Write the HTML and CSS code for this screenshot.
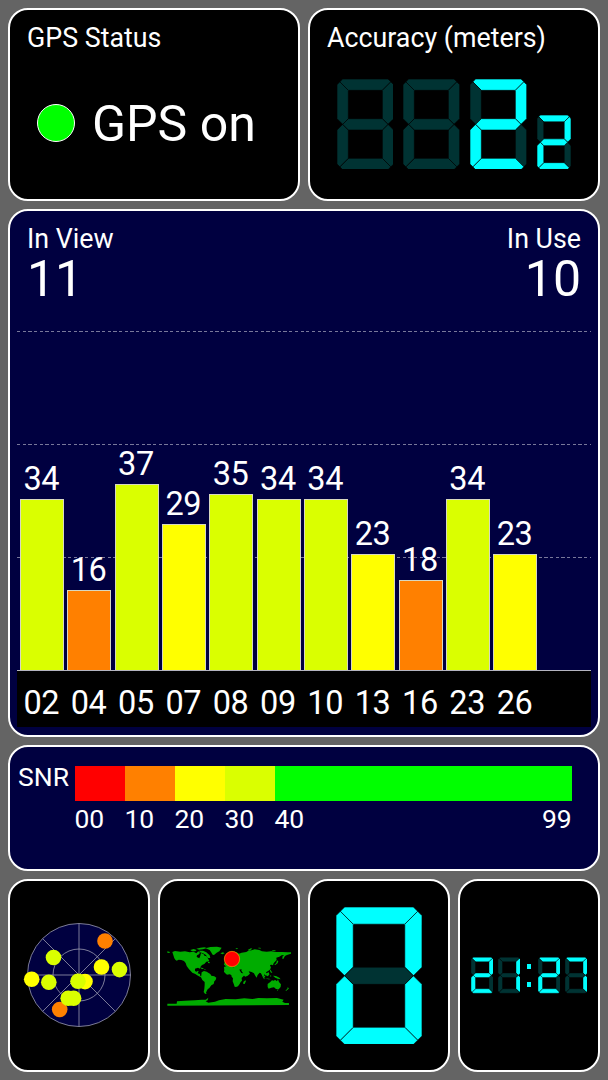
FILE: index.html
```html
<!DOCTYPE html>
<html lang="en">
<head>
  <meta charset="UTF-8" />
  <meta name="viewport" content="width=device-width, initial-scale=1" />
  <title>GPS Test</title>
  <link rel="stylesheet" href="styles.css">
</head>
<body>
  <div class="dashboard">
    <section class="panel status">
      <h2>GPS Status</h2>
      <div class="status-row">
        <span class="status-dot"></span>
        <span class="status-text">GPS on</span>
      </div>
    </section>

    <section class="panel accuracy">
      <h2>Accuracy (meters)</h2>
      <div class="accuracy-digits" id="accuracy"></div>
    </section>

    <section class="panel signal">
      <div class="signal-head">
        <div class="count">
          <h2>In View</h2>
          <div class="count-value">11</div>
        </div>
        <div class="count count-right">
          <h2>In Use</h2>
          <div class="count-value">10</div>
        </div>
      </div>
      <div class="plot">
        <div class="gridlines"><i></i><i></i><i></i></div>
        <div class="bars" id="bars"></div>
      </div>
      <div class="axis" id="axis"></div>
    </section>

    <section class="panel legend">
      <div class="legend-title">SNR</div>
      <div class="legend-scale">
        <div class="step"><i class="snr-00"></i><span>00</span></div>
        <div class="step"><i class="snr-10"></i><span>10</span></div>
        <div class="step"><i class="snr-20"></i><span>20</span></div>
        <div class="step"><i class="snr-30"></i><span>30</span></div>
        <div class="step step-last"><i class="snr-40"></i><span>40</span><span>99</span></div>
      </div>
    </section>

    <section class="panel tile">
      <svg class="sky" viewBox="-56 -56 112 112">
        <circle class="sky-disc" r="51.5" />
        <circle class="sky-line" r="26" />
        <path class="sky-line" d="M-51.5 0H51.5M0 -51.5V51.5M-36.4 -36.4L36.4 36.4M-36.4 36.4L36.4 -36.4" />
        <g id="sats"></g>
      </svg>
    </section>

    <section class="panel tile">
      <svg class="map" viewBox="36 78 370 182">
        <g class="land">
          <!-- north america -->
          <path d="M37 94l8 2 -2 3 -6 -1zM52 96l8 -3 16 2 14 -1 14 3 12 -2 8 5 6 -6 5 4 -3 5 -6 3 -1 5 8 4 3 -8 2 -8 8 4 3 5 5 0 6 9 3 7 -9 1 -6 7 -7 3 -5 6 -1 5 -6 -3 -9 3 0 7 5 2 4 -3 2 2 -3 6 7 2 1 6 5 2 -3 2 -9 -5 -8 -5 -9 -4 -7 -7 -4 -5 -6 -8 -3 -9 -5 -6 -8 -3 -8 -1 -6 3 -4 -3 -3 -4z" />
          <path d="M106 90l10 -3 9 3 -4 4 -10 0zM124 86l12 -3 12 -1 8 2 -12 4 -12 1zM132 92l12 0 10 5 10 9 2 8 -8 0 -5 -9 -9 -5 -9 -3z" />
          <path d="M152 85l14 -4 20 -1 14 3 -3 5 -4 6 -8 4 -8 7 -4 -1 -5 -8 -4 -6zM196 100l8 -3 5 3 -7 3z" />
          <path d="M133 142l10 2 4 3 -6 0zM148 147l5 1 -4 2zM159 126l5 0 0 4 -5 -1z" />
          <!-- south america -->
          <path d="M140 157l7 -4 8 2 6 4 5 3 3 5 9 2 6 4 -2 7 -4 4 -2 8 -7 4 -6 8 -5 4 -3 6 -2 4 2 4 -5 -1 -4 -5 2 -9 1 -12 0 -9 -7 -6 -4 -8 1 -6z" />
          <!-- africa -->
          <path d="M207 141l9 -3 10 -1 8 5 9 0 7 1 4 8 5 8 5 1 8 -1 -6 9 -6 6 1 8 -4 4 -3 6 -5 7 -6 2 -4 -1 -3 -9 -3 -7 1 -9 -4 -5 -1 -5 -5 -2 -8 1 -6 -5 -3 -4 1 -6zM271 181l2 2 -4 9 -4 0 0 -6z" />
          <!-- europe and asia -->
          <path d="M207 134l2 -7 7 -2 -3 -4 7 -3 8 -4 -3 -8 4 -7 8 -4 8 2 7 4 8 -3 14 -2 6 -4 10 -1 9 -3 14 2 8 4 14 1 14 -1 16 2 17 0 16 1 11 0 2 3 -8 3 -7 2 -6 3 -5 9 -3 -1 1 -7 5 -4 -8 1 -7 4 -9 3 1 7 -5 5 -4 5 -2 6 -4 -2 -5 1 3 8 -4 7 -6 4 -5 3 3 5 -3 5 -5 -4 -2 7 4 8 -5 -3 -4 -9 -3 -6 -4 -2 -6 7 -3 8 -5 -7 -3 -6 -7 -4 -9 -2 4 7 -7 6 -7 3 -3 -2 -4 -9 -5 -7 1 -4 -9 1 -4 -3 -5 1 -6 -5 -3 -3 -7 1 -5 5z" />
          <path d="M211 112l5 -2 2 8 -5 2zM278 90l10 -5 4 1 -9 6zM241 85l8 -1 -3 4zM310 83l6 0 2 3 -8 -1zM352 91l10 0 -1 2 -9 0z" />
          <path d="M366 121l4 3 -2 6 -7 5 -3 -1 6 -5z" />
          <!-- islands and oceania -->
          <path d="M319 158l5 4 7 8 -2 3 -7 -8zM334 160l8 -3 1 7 -5 5 -5 -3zM330 175l12 1 6 2 -8 0zM346 164l3 4 -2 4zM345 148l4 5 3 5 -4 0 -3 -5zM354 167l9 1 10 5 4 5 -9 -2 -7 -3zM303 157l2 3 -2 1z" />
          <path d="M338 192l8 -6 5 -5 6 1 3 -3 6 5 3 -6 3 8 6 7 -1 8 -6 7 -8 -1 -6 -5 -8 1 -8 3 -3 -5zM366 209l4 0 -2 4zM398 202l4 3 -4 4 -5 4 -1 -2 5 -4z" />
          <!-- antarctica -->
          <path d="M37 257v-6h28l1 -7 24 -2 30 -1 20 -2 12 0 8 -6 -2 8 -6 3 8 4 20 -3 12 -4 20 -4 30 1 26 -3 24 2 18 -3 26 1 30 -1 20 5 -4 6 8 4h12v6z" />
        </g>
        <circle class="here" cx="231" cy="117" r="23" />
      </svg>
    </section>

    <section class="panel tile">
      <div id="speed"></div>
    </section>

    <section class="panel tile">
      <div class="clock" id="clock"></div>
    </section>
  </div>

  <script>
    // Seven segment shapes on a 50x80 box, keyed a-g
    const segments = {
      a: '5,0 45,0 47.5,2.5 40,10 10,10 2.5,2.5',
      b: '47.5,2.5 50,5 50,35 45,40 40,35 40,10',
      c: '45,40 50,45 50,75 47.5,77.5 40,70 40,45',
      d: '2.5,77.5 10,70 40,70 47.5,77.5 45,80 5,80',
      e: '5,40 10,45 10,70 2.5,77.5 0,75 0,45',
      f: '2.5,2.5 10,10 10,35 5,40 0,35 0,5',
      g: '5,40 10,35 40,35 45,40 40,45 10,45'
    };

    const lit = {
      ' ': '', 0: 'abcdef', 1: 'bc', 2: 'abdeg', 7: 'abc'
    };

    function digit(value, size) {
      const shapes = Object.keys(segments).map(key => {
        const state = lit[value].includes(key) ? 'on' : 'off';
        return `<polygon class="${state}" points="${segments[key]}" />`;
      }).join('');
      return `<svg class="digit digit-${size}" viewBox="0 0 50 80">${shapes}</svg>`;
    }

    document.getElementById('accuracy').innerHTML =
      digit(' ', 'medium') + digit(' ', 'medium') + digit(2, 'medium') + digit(2, 'small');
    document.getElementById('speed').innerHTML = digit(0, 'large');
    document.getElementById('clock').innerHTML =
      digit(2, 'tiny') + digit(1, 'tiny') +
      '<span class="colon"><i></i><i></i></span>' +
      digit(2, 'tiny') + digit(7, 'tiny');

    // Satellites: [id, snr]
    const satellites = [
      ['02', 34], ['04', 16], ['05', 37], ['07', 29], ['08', 35], ['09', 34],
      ['10', 34], ['13', 23], ['16', 18], ['23', 34], ['26', 23]
    ];
    const pxPerDb = 5.03;

    function snrClass(snr) {
      return 'snr-' + (snr >= 40 ? '40' : snr >= 30 ? '30' : snr >= 20 ? '20' : snr >= 10 ? '10' : '00');
    }

    document.getElementById('bars').innerHTML = satellites.map(([id, snr]) => `
      <div class="slot">
        <span>${snr}</span>
        <div class="bar ${snrClass(snr)}" style="height: ${(snr * pxPerDb).toFixed(1)}px"></div>
      </div>`).join('');

    document.getElementById('axis').innerHTML =
      satellites.map(([id]) => `<span>${id}</span>`).join('');

    // Sky positions relative to the zenith: [x, y, snr]
    const sky = [
      [-19.3, 34.5, 16], [26, -34, 18], [-25.5, -17.5, 34], [22.5, -8, 23],
      [40.5, -5.4, 34], [-47.3, 4.3, 29], [-30.2, 7.3, 37], [6, 6.6, 23],
      [-1, 6.3, 34], [-10.8, 23.3, 35], [-5.4, 23.3, 34]
    ];

    document.getElementById('sats').innerHTML = sky.map(([x, y, snr]) =>
      `<circle class="${snrClass(snr)}" cx="${x}" cy="${y}" r="7.8" />`).join('');
  </script>
</body>
</html>
```
FILE: styles.css
```css
* {
  box-sizing: border-box;
}

body {
  margin: 0;
  background-color: #646464;
  color: #fff;
  font-family: Roboto, sans-serif;
}

h2 {
  margin: 0;
  font-size: 26.8px;
  font-weight: normal;
  line-height: 30px;
}

.dashboard {
  display: grid;
  grid-template-columns: repeat(4, 1fr);
  grid-template-rows: 192.5px 528px 126px 193.5px;
  gap: 8px;
  width: 608px;
  height: 1080px;
  padding: 8px;
}

.panel {
  background-color: #000;
  border: 2px solid #fff;
  border-radius: 20px;
  overflow: hidden;
}

/* GPS status */
.status,
.accuracy {
  grid-column: span 2;
  padding: 13px 17px;
}

.status-row {
  display: flex;
  align-items: center;
  gap: 17px;
  height: 56px;
  margin: 42px 0 0 10px;
}

.status-dot {
  width: 38px;
  height: 38px;
  border: 1px solid #fff;
  border-radius: 50%;
  background-color: #0f0;
}

.status-text {
  padding-top: 2px;
  font-size: 50px;
  line-height: 56px;
}

/* Seven segment displays */
.accuracy-digits {
  display: flex;
  align-items: flex-end;
  gap: 10.3px;
  margin: 25.5px 0 0 9.5px;
}

.digit {
  display: block;
}

.digit polygon {
  stroke: #000;
  stroke-width: 0.6px;
  vector-effect: non-scaling-stroke;
}

.on { fill: #0ff; }
.off { fill: #033; }

.digit-large { width: 86px; height: 137.5px; }
.digit-medium { width: 56.7px; height: 90.7px; }
.digit-small { width: 34px; height: 54.5px; }
.digit-tiny { width: 22.5px; height: 36.5px; }

.digit-tiny polygon {
  stroke-width: 0.4px;
}

/* Signal chart */
.signal {
  grid-column: span 4;
  padding-top: 13.5px;
  background-color: #000040;
}

.signal-head {
  display: flex;
  justify-content: space-between;
  height: 107px;
  padding: 0 17px;
}

.count-value {
  margin-top: 1.5px;
  font-size: 50px;
  line-height: 46px;
}

.count-right {
  text-align: right;
}

.plot {
  display: grid;
  height: 340px;
  margin: 0 7px;
  border-bottom: 1px solid #b4b4c0;
}

.gridlines,
.bars {
  grid-area: 1 / 1;
}

.gridlines i {
  display: block;
  height: 113px;
  background: repeating-linear-gradient(90deg, #78789a 0 3.3px, transparent 3.3px 5.67px) top / 100% 1px no-repeat;
}

.bars {
  display: flex;
  align-items: flex-end;
  padding-left: 1.3px;
}

.slot {
  width: 47.33px;
  padding: 0 1.6px;
  font-size: 32.5px;
  letter-spacing: -0.4px;
  line-height: 32px;
  text-align: center;
}

.slot span {
  display: block;
  margin: 0 1.4px 4px 0;
}

.bar {
  border: 1px solid #d8d8c0;
  border-bottom: none;
}

.axis {
  display: flex;
  height: 56px;
  margin: 0 7px;
  padding: 8px 0 0 0.6px;
  background-color: #000;
  font-size: 32.5px;
  letter-spacing: -0.4px;
  line-height: 49px;
  text-align: center;
}

.axis span {
  width: 47.33px;
}

/* SNR colours */
.snr-00 { background-color: #f00; fill: #f00; }
.snr-10 { background-color: #ff8000; fill: #ff8000; }
.snr-20 { background-color: #ff0; fill: #ff0; }
.snr-30 { background-color: #daff00; fill: #daff00; }
.snr-40 { background-color: #0f0; fill: #0f0; }

.legend {
  display: flex;
  grid-column: span 4;
  padding: 19.5px 26.5px 0 8px;
  background-color: #000040;
  font-size: 26.5px;
  line-height: 30px;
}

.legend-title {
  width: 56.5px;
  margin-top: -4.5px;
}

.legend-scale {
  display: flex;
  flex: 1;
}

.step {
  width: 50px;
}

.step i {
  display: block;
  height: 35px;
  margin-bottom: 3px;
}

.step span {
  letter-spacing: -0.2px;
}

.step-last {
  display: flex;
  flex: 1;
  flex-wrap: wrap;
  align-content: flex-start;
  justify-content: space-between;
}

.step-last i {
  width: 100%;
}

/* Bottom tiles */
.tile {
  display: flex;
  align-items: center;
  justify-content: center;
}

.sky {
  width: 112px;
  height: 112px;
}

.sky-disc {
  fill: #000040;
}

.sky-disc,
.sky-line {
  stroke: #9a9ab0;
  stroke-width: 0.8;
}

.sky-line {
  fill: none;
}

.map {
  width: 123.3px;
  height: 60.7px;
  margin-top: 2px;
}

.land {
  fill: #00ac00;
}

.here {
  fill: #f00;
  stroke: #ffa000;
  stroke-width: 2;
}

.clock {
  display: flex;
  gap: 4.5px;
}

.colon {
  display: flex;
  flex-direction: column;
  gap: 13px;
  margin: 7px 2px 0;
}

.colon i {
  width: 4.5px;
  height: 5px;
  background-color: #0ff;
}
```
